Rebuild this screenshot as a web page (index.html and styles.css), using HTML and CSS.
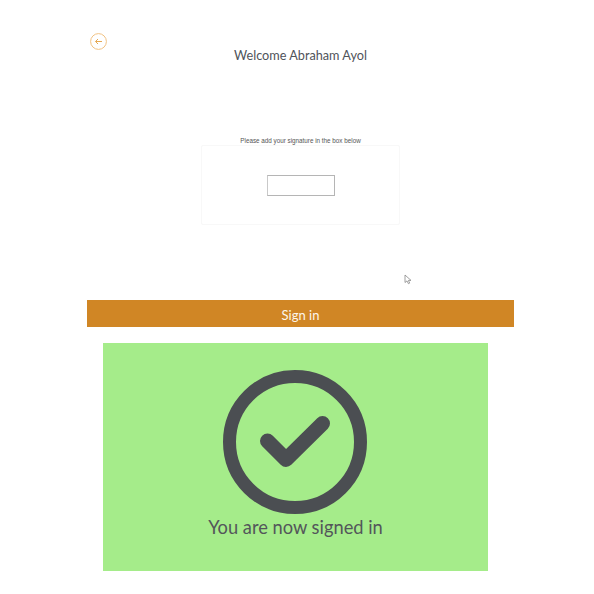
FILE: index.html
```html
<!DOCTYPE html>
<html lang="en">
<head>
<meta charset="utf-8">
<title>Sign in</title>
<link rel="stylesheet" href="styles.css">
</head>
<body>
<main class="app">
  <button class="back" aria-label="Back">
    <svg width="17" height="17" viewBox="0 0 17 17" fill="none" stroke="#f1c283">
      <circle cx="8.500" cy="8.500" r="7.900" stroke-width="1"/>
      <path d="M12 8.500H5.600M8 6L5.500 8.500 8 11" stroke="#e5a955" stroke-width="1"/>
    </svg>
  </button>
  <h1 class="title">Welcome Abraham Ayol</h1>
  <section class="signature">
    <p class="hint">Please add your signature in the box below</p>
    <div class="pad"><div class="field"></div></div>
    <svg class="cursor" width="8" height="11" viewBox="0 0 8 11" fill="#fff" stroke="#888" stroke-width="0.8">
      <path d="M1 1v7.500l2-1.600 1.400 2.800 1.300-.6-1.300-2.700H7z"/>
    </svg>
  </section>
  <button class="submit">Sign in</button>
  <section class="success">
    <svg class="check" width="144" height="144" viewBox="0 0 144 144" fill="none" stroke="#4b4e52">
      <circle cx="72" cy="72" r="65.500" stroke-width="13"/>
      <path d="M44.500 71L63 89.500 99.500 53.500" stroke-width="15" stroke-linecap="round" stroke-linejoin="round"/>
    </svg>
    <p class="done">You are now signed in</p>
  </section>
</main>
</body>
</html>
```
FILE: styles.css
```css
* { box-sizing: border-box; }
html, body { margin: 0; background: #fff; }
.app {
  width: 427px;
  margin-left: 87px;
  padding-top: 33px;
  display: flex;
  flex-direction: column;
}
.back {
  width: 17px;
  height: 17px;
  margin-left: 3px;
  padding: 0;
  border: 0;
  background: none;
  display: block;
}
.back svg { display: block; }
.title {
  margin: -4px 0 0;
  height: 18px;
  font: 400 12.700px/18px Lato, "Open Sans", sans-serif;
  color: #50535a;
  text-align: center;
}
.signature {
  position: relative;
  height: 236px;
  padding-top: 72px;
  display: flex;
  flex-direction: column;
  align-items: center;
}
.hint {
  margin: 0;
  height: 9px;
  font: 400 6.300px/9px "Liberation Sans", Arial, sans-serif;
  color: #555;
}
.pad {
  width: 199px;
  height: 80px;
  border: 1px solid #f8f8f8;
  border-radius: 2px;
  display: flex;
  align-items: center;
  justify-content: center;
}
.field {
  width: 68px;
  height: 21px;
  border: 1px solid #b5b5b5;
  border-left-color: #c9c9c9;
  background: #fff;
}
.cursor {
  position: absolute;
  left: 317px;
  top: 210px;
}
.submit {
  display: block;
  width: 100%;
  height: 27px;
  padding: 4px 0 0;
  border: 0;
  background: #d08625;
  color: #fdf6ec;
  font: 400 13px/23px Lato, "Open Sans", sans-serif;
  text-align: center;
}
.success {
  width: 385px;
  height: 228px;
  margin: 16px 0 0 16px;
  padding-top: 27px;
  background: #a5ec8a;
  display: flex;
  flex-direction: column;
  align-items: center;
}
.check { display: block; margin-left: -2px; }
.done {
  margin: 1px 0 0;
  font: 400 18.300px/24px Lato, "Open Sans", sans-serif;
  color: #53565a;
}
```
